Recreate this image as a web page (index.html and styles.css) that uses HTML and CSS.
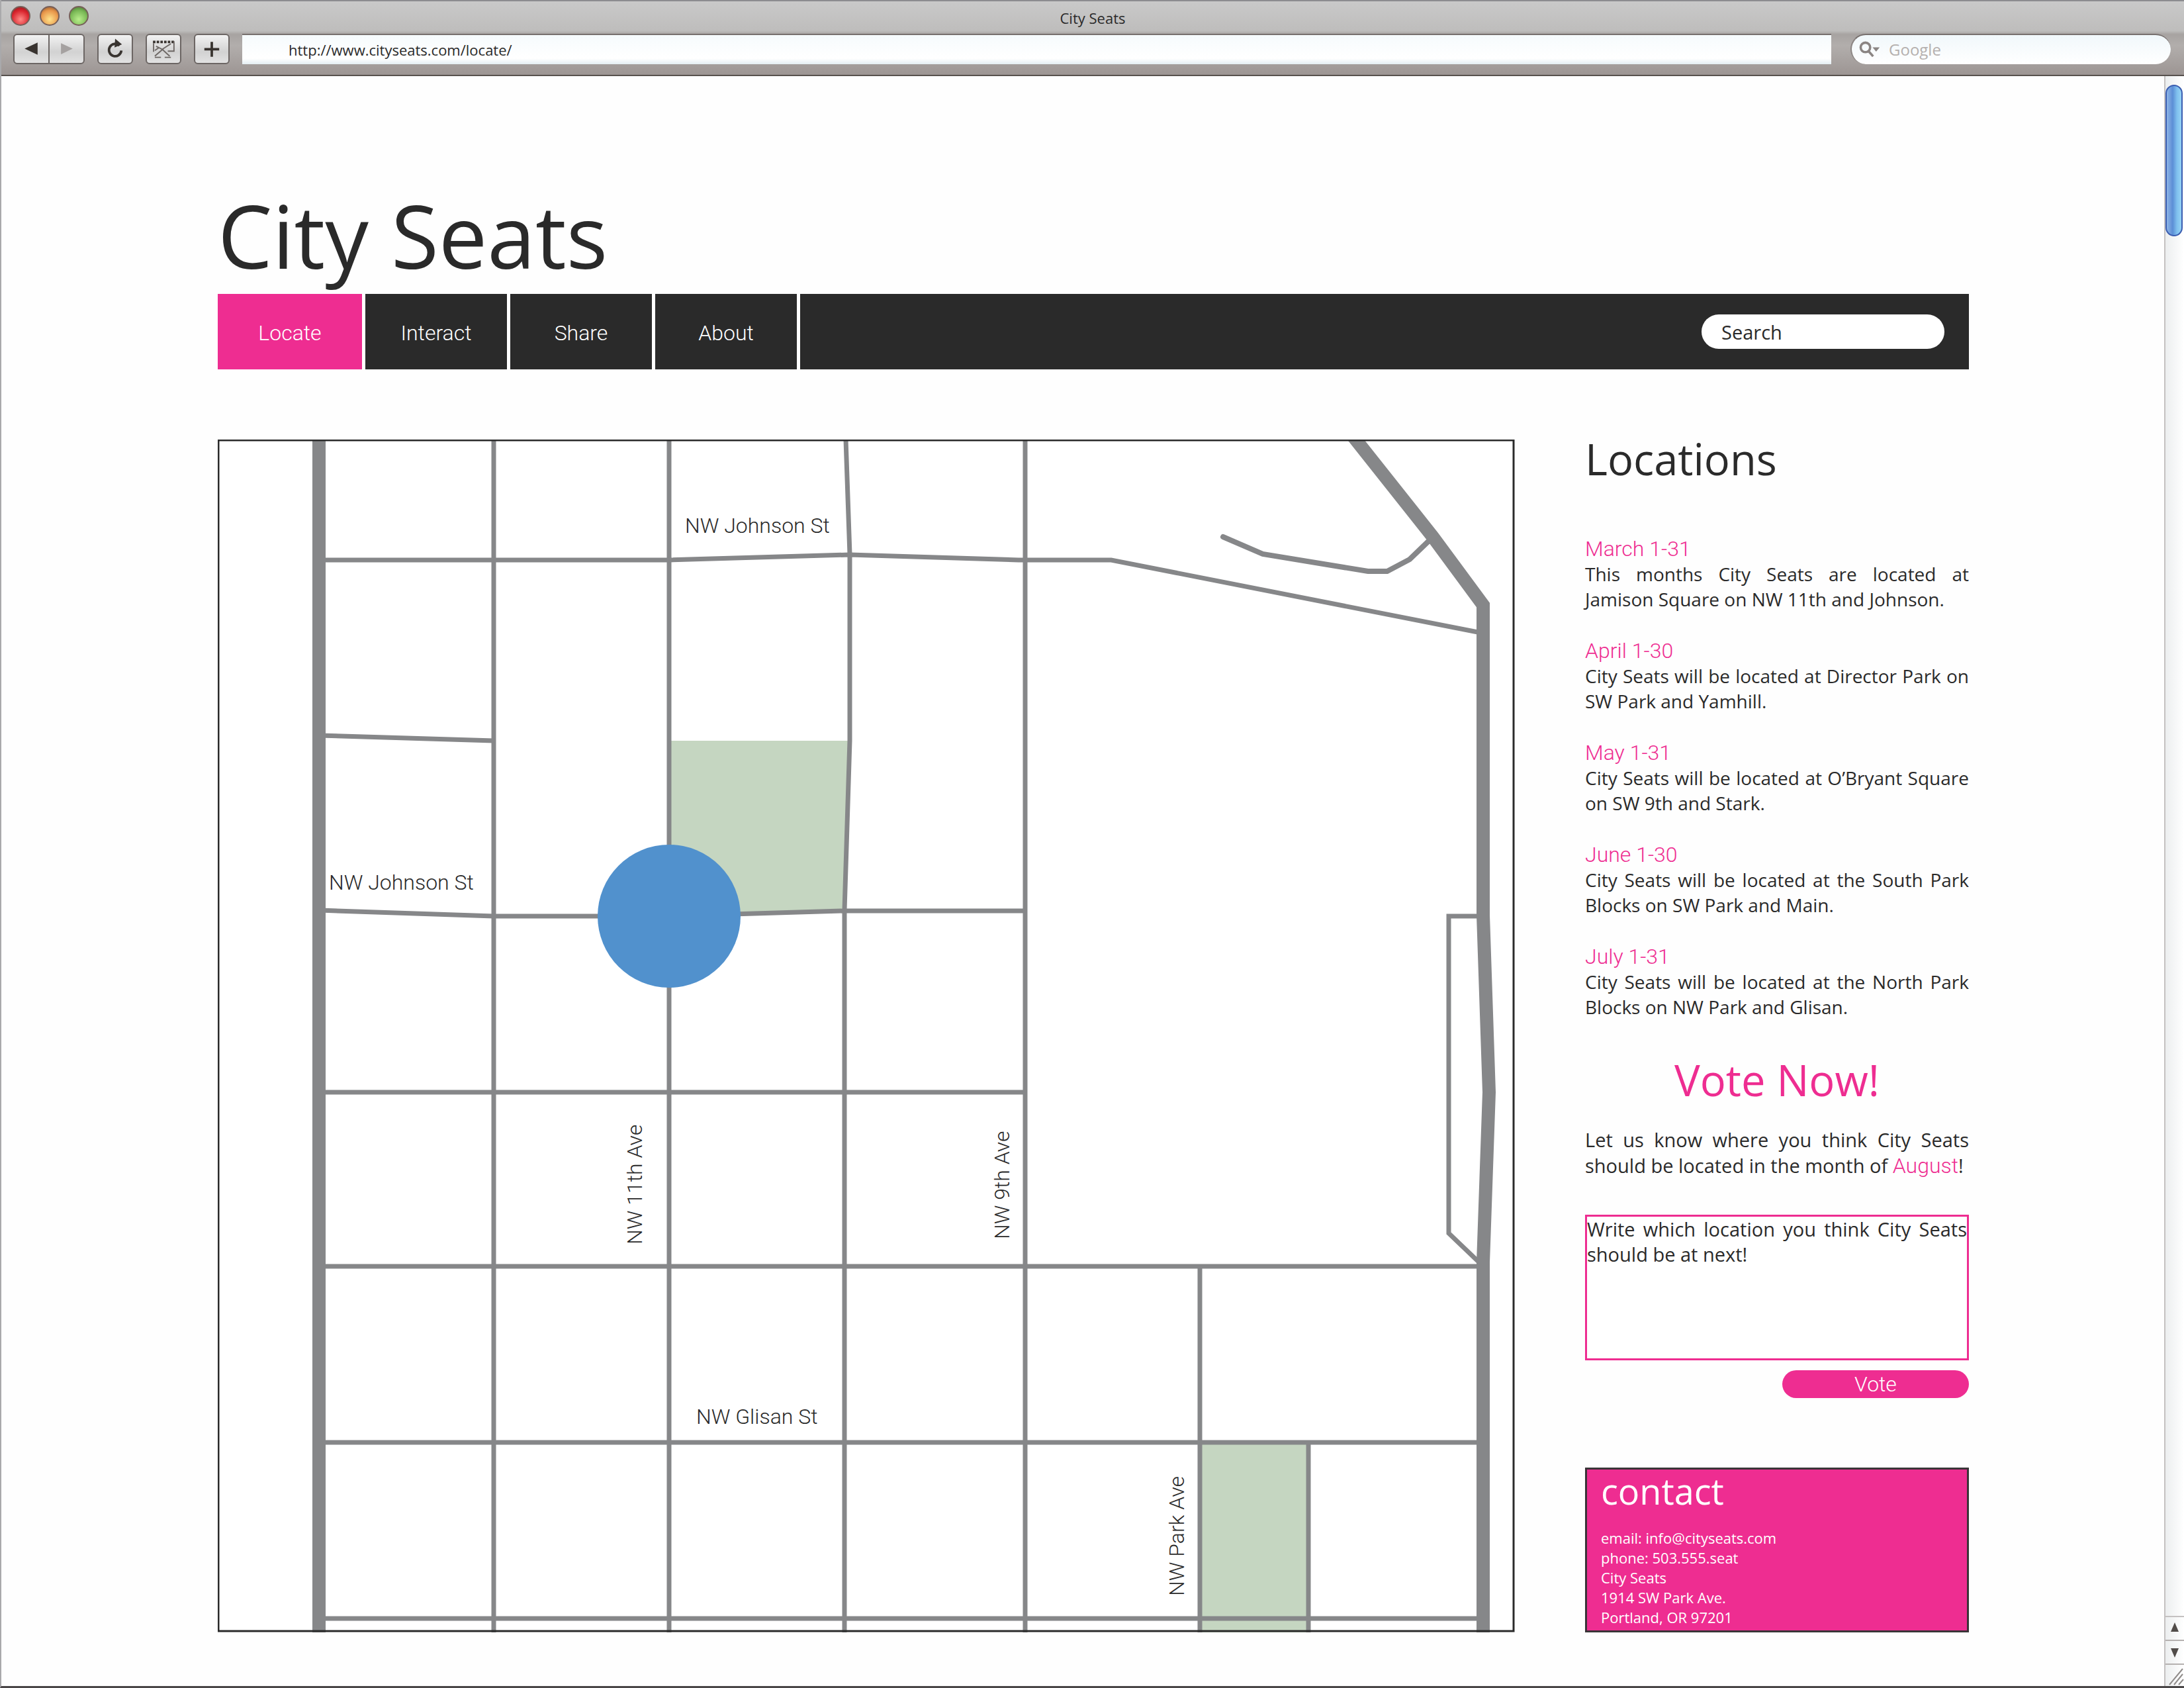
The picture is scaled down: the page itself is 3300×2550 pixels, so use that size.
FILE: index.html
```html
<!DOCTYPE html>
<html lang="en">
<head>
  <meta charset="UTF-8" />
  <meta name="viewport" content="width=device-width, initial-scale=1" />
  <title>City Seats</title>
  <link rel="stylesheet" href="styles.css">
</head>
<body>
  <div class="browser">
    <div class="chrome">
      <div class="titlebar">
        <div class="lights">
          <span class="light red"></span>
          <span class="light orange"></span>
          <span class="light green"></span>
        </div>
        <span class="window-title">City Seats</span>
      </div>
      <div class="toolbar">
        <div class="btn-pair">
          <button class="tool" aria-label="Back">
            <svg viewBox="0 0 52 45"><path d="M36 12V32L15 22Z" fill="#38332f"/></svg>
          </button>
          <button class="tool" aria-label="Forward">
            <svg viewBox="0 0 52 45"><path d="M17 13V31L36 22Z" fill="#a5a1a0"/></svg>
          </button>
        </div>
        <button class="tool" aria-label="Reload">
          <svg viewBox="0 0 52 45"><path d="M33 17A10 10 0 1 0 36 25" fill="none" stroke="#38332f" stroke-width="4"/><path d="M26 6L37 15L25 20Z" fill="#38332f"/></svg>
        </button>
        <button class="tool" aria-label="Snapshot">
          <svg viewBox="0 0 52 45"><path d="M9 11H43" stroke="#38332f" stroke-width="4" stroke-dasharray="4 2"/><path d="M43 10V26H33M10 13V27M14 18L24 23L38 14M24 23L36 34M26 22L12 34M12 25L19 20M12 36H22M28 36H38" fill="none" stroke="#6d6764" stroke-width="2"/></svg>
        </button>
        <button class="tool" aria-label="Add bookmark">
          <svg viewBox="0 0 52 45"><path d="M26 11V35M14 23H38" stroke="#38332f" stroke-width="4"/></svg>
        </button>
        <input class="address" type="text" value="http://www.cityseats.com/locate/" aria-label="Address">
        <div class="web-search">
          <svg viewBox="0 0 40 36" aria-hidden="true"><circle cx="14" cy="14" r="8" fill="none" stroke="#8b8583" stroke-width="4"/><path d="M19 20L27 29" stroke="#8b8583" stroke-width="4"/><path d="M26 14H38L32 21Z" fill="#8b8583"/></svg>
          <input type="text" placeholder="Google" aria-label="Google">
        </div>
      </div>
    </div>

    <div class="viewport">
      <div class="page">
        <h1>City Seats</h1>

        <nav>
          <a class="active" href="#locate">Locate</a>
          <a href="#interact">Interact</a>
          <a href="#share">Share</a>
          <a href="#about">About</a>
          <input class="search" type="text" value="Search" aria-label="Search">
        </nav>

        <div class="content">
          <svg class="map" viewBox="0 0 1960 1802" role="img" aria-label="Map of the Pearl District">
            <!-- parks -->
            <path class="park" d="M682 455H955L947 712L682 720Z"/>
            <path class="park" d="M1484 1515H1648V1802H1484Z"/>

            <!-- avenues -->
            <path class="street" d="M417 0V1802M682 0V1802M1220 0V1802"/>
            <path class="street" d="M949 0L955 173V455L947 711V1802"/>
            <path class="street" d="M1484 1249V1802M1648 1515V1802"/>

            <!-- streets -->
            <path class="street" d="M153 182H682L955 174L1210 182H1350L1904 291"/>
            <path class="street" d="M153 447L417 455"/>
            <path class="street" d="M153 711L417 720H682L947 712H1220"/>
            <path class="street" d="M153 986H1220M153 1249H1912M153 1515H1912M153 1781H1912"/>
            <path class="street round" d="M1519 147L1579 173L1738 199H1767L1801 181L1829 154"/>
            <path class="street" d="M1912 720H1860V1199L1906 1243"/>

            <!-- main roads -->
            <path class="road" d="M153 0V1802"/>
            <path class="road" d="M1713 -8L1836 147L1912 250V719L1921 986L1912 1243V1802"/>

            <circle class="marker" cx="682" cy="720" r="108"/>

            <text x="706" y="141">NW Johnson St</text>
            <text x="168" y="680">NW Johnson St</text>
            <text x="723" y="1487">NW Glisan St</text>
            <text transform="translate(641 1216) rotate(-90)">NW 11th Ave</text>
            <text transform="translate(1196 1208) rotate(-90)">NW 9th Ave</text>
            <text transform="translate(1460 1747) rotate(-90)">NW Park Ave</text>

            <rect class="frame" x="1" y="1" width="1957" height="1799"/>
          </svg>

          <aside>
            <h2>Locations</h2>
            <div class="locations">
              <div>
                <h3>March 1-31</h3>
                <p>This months City Seats are located at Jamison Square on NW 11th and Johnson.</p>
              </div>
              <div>
                <h3>April 1-30</h3>
                <p>City Seats will be located at Director Park on SW Park and Yamhill.</p>
              </div>
              <div>
                <h3>May 1-31</h3>
                <p>City Seats will be located at O’Bryant Square on SW 9th and Stark.</p>
              </div>
              <div>
                <h3>June 1-30</h3>
                <p>City Seats will be located at the South Park Blocks on SW Park and Main.</p>
              </div>
              <div>
                <h3>July 1-31</h3>
                <p>City Seats will be located at the North Park Blocks on NW Park and Glisan.</p>
              </div>
            </div>

            <form class="vote">
              <h2>Vote Now!</h2>
              <label for="voteText">Let us know where you think City Seats should be located in the month of <em>August</em>!</label>
              <textarea id="voteText">Write which location you think City Seats should be at next!</textarea>
              <button type="submit">Vote</button>
            </form>

            <div class="contact">
              <h2>contact</h2>
              <address>
                email: info@cityseats.com<br>
                phone: 503.555.seat<br>
                City Seats<br>
                1914 SW Park Ave.<br>
                Portland, OR 97201
              </address>
            </div>
          </aside>
        </div>
      </div>

      <div class="scrollbar">
        <div class="thumb"></div>
        <div class="arrows">
          <svg viewBox="0 0 28 34"><path d="M14 8L20 22H8Z" fill="#514c49"/></svg>
          <svg viewBox="0 0 28 34"><path d="M14 25L20 11H8Z" fill="#514c49"/></svg>
        </div>
        <svg class="grip" viewBox="0 0 28 32"><path d="M6 30L26 6M13 30L26 14M20 30L27 22" stroke="#8f8b89" stroke-width="2"/></svg>
      </div>
    </div>
  </div>
</body>
</html>
```

FILE: styles.css
```css
:root {
  --pink: #ee2d91;
  --dark: #2a2a2a;
  --road: #868789;
  --sans: 'Open Sans', 'Noto Sans', sans-serif;
  --light: Roboto, 'Liberation Sans', sans-serif;
}
* {
  margin: 0;
  padding: 0;
  box-sizing: border-box;
}
body {
  font-family: var(--sans);
  font-size: 29px;
  line-height: 38px;
  color: var(--dark);
  background: #fefefe;
}
button, input, textarea {
  font: inherit;
  color: inherit;
  border: none;
  outline: none;
}
.browser {
  display: flex;
  flex-direction: column;
  min-height: 100vh;
  border-left: 2px solid #a9a9ab;
  border-bottom: 3px solid #4a4748;
}

/* window chrome */
.chrome {
  height: 115px;
  background: linear-gradient(#c9c9c9, #bebdbc 40%, #a7a3a1 45%, #b2aeac 60%, #9c9593);
  border-top: 2px solid #8c8c90;
  border-bottom: 2px solid #56504d;
}
.titlebar {
  display: grid;
  grid-template-columns: 1fr auto 1fr;
  align-items: center;
  height: 49px;
}
.lights {
  display: flex;
  gap: 14px;
  padding: 0 0 6px 14px;
}
.light {
  width: 30px;
  height: 30px;
  border-radius: 50%;
  border: 2px solid #77605a;
}
.red {
  background: radial-gradient(circle at 50% 70%, #ff8a86, #d8232c 60%, #7c1d1d);
}
.orange {
  background: radial-gradient(circle at 50% 70%, #ffe28a, #e8964a 60%, #7e4a24);
}
.green {
  background: radial-gradient(circle at 50% 70%, #b9ee8c, #79b855 60%, #3d6629);
}
.window-title {
  font-size: 22px;
}
.toolbar {
  display: flex;
  gap: 19px;
  padding: 0 20px 0 18px;
}
.btn-pair {
  display: flex;
}
.tool {
  width: 54px;
  height: 46px;
  border: 2px solid #6c6664;
  border-radius: 6px;
  background: linear-gradient(#f2f2f2, #d2d2d2 60%, #e2e2e2);
}
.tool svg {
  display: block;
  width: 100%;
  height: 100%;
}
.btn-pair .tool:first-child {
  border-radius: 6px 0 0 6px;
  border-right-width: 1px;
}
.btn-pair .tool:last-child {
  border-radius: 0 6px 6px 0;
  border-left-width: 1px;
}
.address {
  flex: 1;
  height: 46px;
  padding-left: 70px;
  font-size: 22px;
  background: linear-gradient(#f6fbfd, #fff 80%, #e4eef3);
  border-top: 2px solid #77706e;
}
.web-search {
  display: flex;
  align-items: center;
  gap: 12px;
  width: 484px;
  height: 46px;
  margin-left: 10px;
  padding-left: 8px;
  border-radius: 23px;
  border-top: 2px solid #77706e;
  border-left: 2px solid #8b8583;
  background: linear-gradient(#f1f8fb, #fff);
}
.web-search svg {
  width: 36px;
}
.web-search input {
  flex: 1;
  min-width: 0;
  font-size: 24px;
  background: none;
}
.web-search input::placeholder {
  color: #b5b0ae;
}

.viewport {
  flex: 1;
  display: flex;
}
.page {
  flex: 1;
  padding: 160px 295px 80px 327px;
}

h1, h2, h3 {
  font-weight: 400;
}
h1 {
  font-size: 131px;
  line-height: 160px;
  margin-bottom: 9px;
}
h2 {
  font-size: 65px;
  line-height: 58px;
}

nav {
  display: flex;
  align-items: center;
  height: 114px;
  margin-bottom: 106px;
  background: var(--dark);
}
nav a {
  width: 219px;
  padding-top: 5px;
  line-height: 109px;
  border-right: 5px solid #fff;
  font-family: var(--light);
  font-weight: 300;
  font-size: 32px;
  text-align: center;
  text-decoration: none;
  color: #fff;
}
nav a.active {
  width: 223px;
  background: var(--pink);
}
.search {
  width: 367px;
  height: 52px;
  margin: 0 37px 0 auto;
  padding-left: 30px;
  border-radius: 26px;
  background: #fff;
}

.content {
  display: grid;
  grid-template-columns: 1fr 580px;
  gap: 106px;
}

/* map */
.map {
  display: block;
  width: 100%;
  background: #fff;
}
.map text {
  font-family: var(--light);
  font-weight: 300;
  font-size: 32px;
  fill: var(--dark);
}
.park {
  fill: #c5d6c1;
}
.street, .road {
  fill: none;
  stroke: var(--road);
  stroke-width: 7px;
}
.road {
  stroke-width: 20px;
}
.round {
  stroke-width: 8px;
  stroke-linecap: round;
}
.marker {
  fill: #5191cd;
}
.frame {
  fill: none;
  stroke: var(--dark);
  stroke-width: 3px;
}

/* sidebar */
aside {
  display: flex;
  flex-direction: column;
}
.locations {
  display: grid;
  gap: 40px;
  margin-top: 88px;
  font-size: 28px;
  text-align: justify;
}
h3, em {
  font-family: var(--light);
  font-weight: 300;
  font-size: 32px;
  font-style: normal;
  color: var(--pink);
}
.vote {
  display: flex;
  flex-direction: column;
  margin-top: 62px;
}
.vote h2 {
  margin-bottom: 42px;
  text-align: center;
  color: var(--pink);
}
.vote label {
  margin-bottom: 54px;
  line-height: 39px;
  text-align: justify;
}
.vote textarea {
  height: 220px;
  border: 3px solid var(--pink);
  text-align: justify;
  resize: none;
  background: #fff;
}
.vote button {
  align-self: flex-end;
  width: 282px;
  height: 42px;
  margin-top: 15px;
  border-radius: 21px;
  font-family: var(--light);
  font-weight: 300;
  font-size: 32px;
  color: #fff;
  background: var(--pink);
}
.contact {
  margin-top: auto;
  height: 249px;
  padding: 3px 21px;
  border: 3px solid #3a3438;
  color: #fff;
  background: var(--pink);
}
.contact h2 {
  font-size: 54px;
}
.contact address {
  margin-top: 27px;
  font-size: 22px;
  line-height: 30px;
  font-style: normal;
}

/* scrollbar */
.scrollbar {
  display: flex;
  flex-direction: column;
  width: 30px;
  padding-top: 13px;
  border-left: 2px solid #c4c1c1;
  background: linear-gradient(90deg, #eceeef, #fff);
}
.thumb {
  width: 26px;
  height: 229px;
  border: 2px solid #3a5db0;
  border-radius: 13px;
  background: linear-gradient(90deg, #8fb5e6, #5b8ed6 40%, #7fc0ee 70%, #97d3f5);
}
.arrows {
  margin-top: auto;
  border-top: 2px solid #c4c1c1;
}
.arrows svg {
  display: block;
  width: 28px;
  border-bottom: 2px solid #b5b1b0;
}
.grip {
  width: 28px;
}
```
